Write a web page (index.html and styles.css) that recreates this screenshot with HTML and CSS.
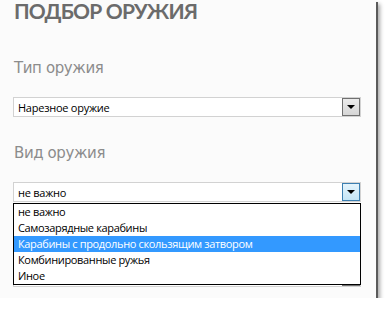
FILE: index.html
```html
<!DOCTYPE html>
<html lang="ru">
<head>
    <meta charset="UTF-8">
    <meta name="viewport" content="width=device-width, initial-scale=1.0">
    <title>Подбор оружия</title>
    <link rel="stylesheet" href="styles.css">
</head>
<body>
    <div class="panel">
        <h1 class="title">ПОДБОР ОРУЖИЯ</h1>

        <div class="field">
            <div class="label">Тип оружия</div>
            <div class="select">
                <span class="value">Нарезное оружие</span>
                <span class="arrow"></span>
            </div>
        </div>

        <div class="field">
            <div class="label">Вид оружия</div>
            <div class="select-wrap">
                <div class="select open">
                    <span class="value">не важно</span>
                    <span class="arrow"></span>
                </div>
                <ul class="options">
                    <li>не важно</li>
                    <li>Самозарядные карабины</li>
                    <li class="active">Карабины с продольно скользящим затвором</li>
                    <li>Комбинированные ружья</li>
                    <li>Иное</li>
                </ul>
            </div>
        </div>

        <!-- next field sits under the open list, only its bottom edge shows -->
        <div class="field">
            <div class="label"></div>
            <div class="select">
                <span class="value"></span>
                <span class="arrow"></span>
            </div>
        </div>
    </div>
</body>
</html>
```

FILE: styles.css
```css
body {
    margin: 0;
    background-color: #fff;
    font-family: "Open Sans", Arial, sans-serif;
}
.panel {
    width: 348px;
    height: 298px;
    padding: 0 15px 0 13px;
    background-color: #fbfbfb;
    box-shadow: 2px 2px 0 #5a5a5a, 4px 4px 4px rgba(0, 0, 0, 0.35);
    overflow: hidden;
}
.title {
    margin: 1px 0 0 1px;
    font-family: Lato, sans-serif;
    font-size: 21px;
    line-height: 20px;
    font-weight: bold;
    color: #6b6b6b;
    letter-spacing: -0.8px;
}
.field {
    margin-top: 37px;
}
.field + .field {
    margin-top: 26px;
}
.label {
    height: 20px;
    margin-left: 1px;
    font-family: "DejaVu Sans", sans-serif;
    font-size: 15px;
    line-height: 20px;
    letter-spacing: -0.4px;
    color: #8c8c8c;
    margin-bottom: 19px;
}
.select-wrap {
    position: relative;
}
.select {
    display: flex;
    align-items: center;
    height: 18px;
    border: 1px solid #d2d2d2;
    background-color: #fff;
}
.value {
    flex: 1;
    padding-left: 4px;
    font-size: 11px;
    letter-spacing: -0.25px;
    color: #000;
}
.arrow {
    width: 16px;
    height: 16px;
    border: 1px solid #707070;
    background: linear-gradient(#ebebeb, #d6d6d6);
    position: relative;
}
.arrow::after {
    content: "";
    position: absolute;
    left: 4px;
    top: 6px;
    border-left: 4px solid transparent;
    border-right: 4px solid transparent;
    border-top: 4px solid #000;
}
.open .arrow {
    border-color: #3c7fb1;
    background: linear-gradient(#e5f4fc, #c4e5f6);
}
.options {
    position: absolute;
    left: 0;
    top: 21px;
    width: 346px;
    margin: 0;
    padding: 0;
    list-style: none;
    border: 1px solid #000;
    background-color: #fff;
    z-index: 2;
}
.options li {
    height: 16px;
    line-height: 16px;
    padding-left: 4px;
    font-size: 11px;
    letter-spacing: -0.35px;
    color: #000;
}
.options .active {
    background-color: #3399ff;
    color: #fff;
}
```
